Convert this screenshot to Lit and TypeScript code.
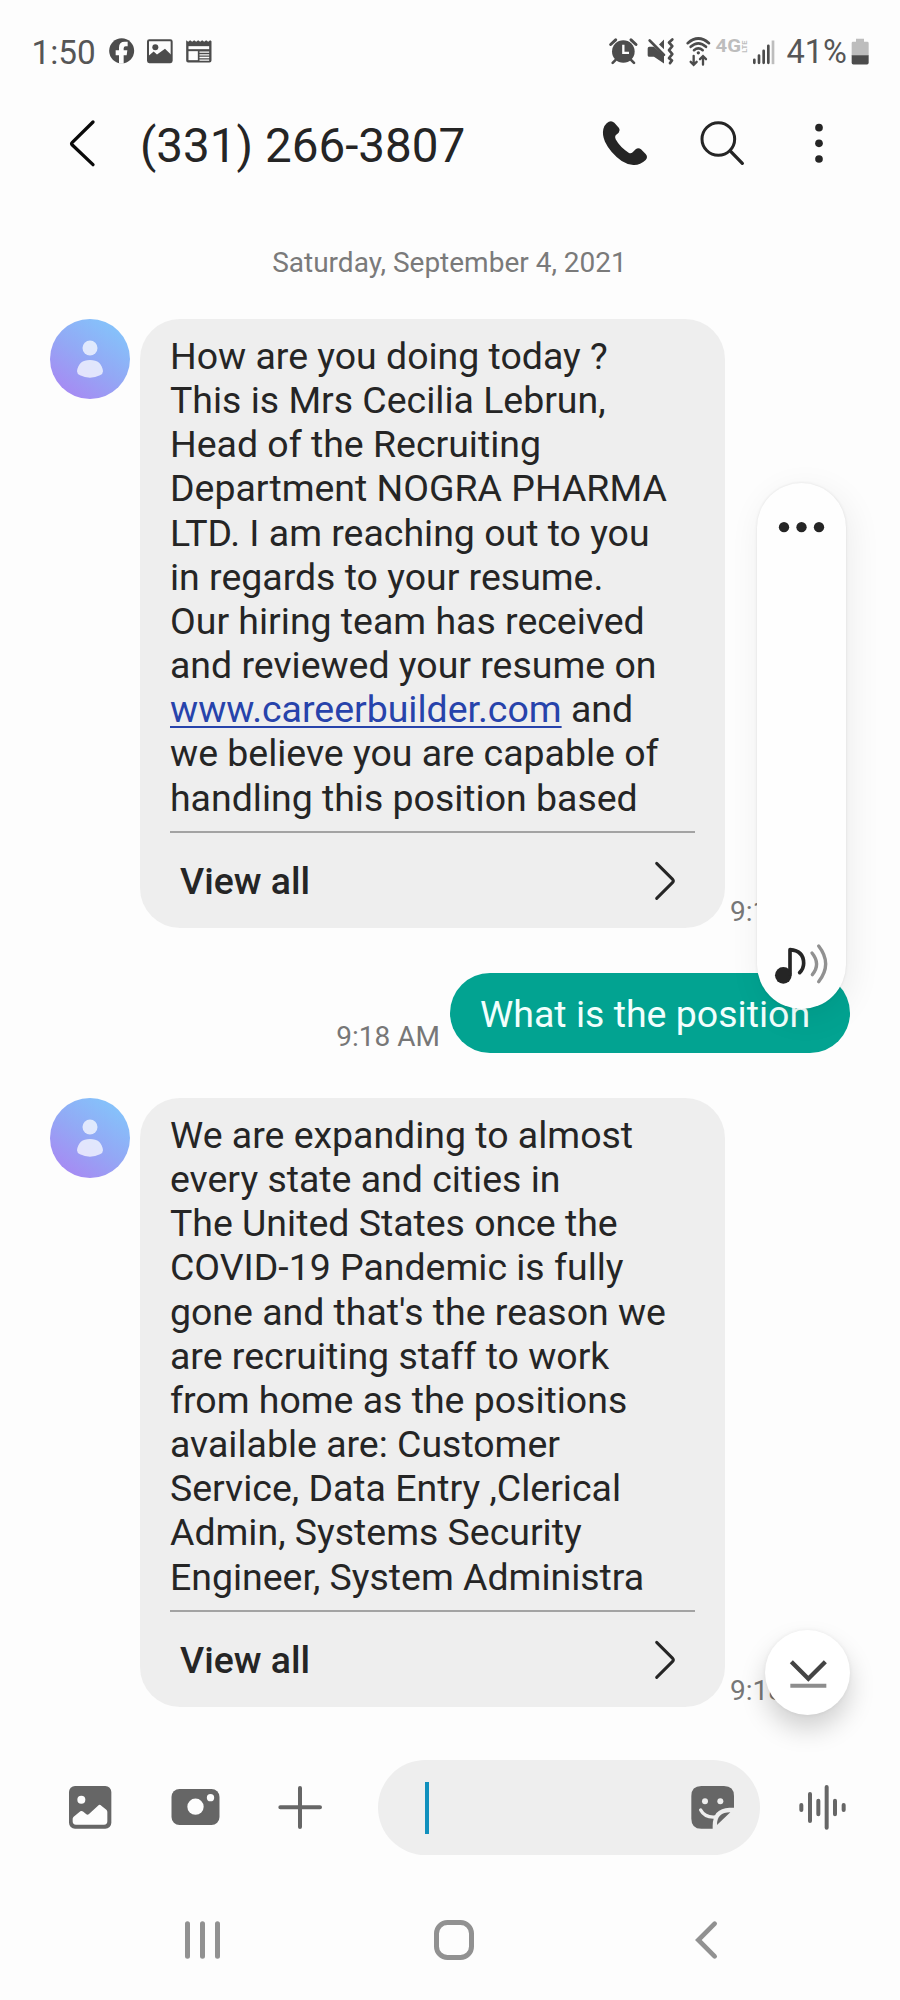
import { LitElement, html, svg, css, TemplateResult, SVGTemplateResult } from "lit";
import { customElement, property } from "lit/decorators.js";

/** Frames a drawing: the window (x, y, w, h) of a canvas whose units are a third of a pixel from (ox, oy). */
const icon = (
  win: [number, number, number, number],
  [ox, oy]: [number, number],
  body: SVGTemplateResult,
) => html`<svg width=${win[2]} height=${win[3]} viewBox=${win.join(" ")} aria-hidden="true">
  <g transform="translate(${ox} ${oy}) scale(.33333)">${body}</g>
</svg>`;

const base = css`
  :host {
    display: block;
    font-family: Roboto, "Liberation Sans", sans-serif;
  }
  svg {
    display: block;
    flex: none;
    overflow: visible;
  }
  .dark { fill: #252525; }
  .stroke { fill: none; stroke-linecap: round; stroke-linejoin: round; }
`;

@customElement("status-bar")
class StatusBar extends LitElement {
  static styles = [
    base,
    css`
      .bar {
        display: flex;
        align-items: center;
        height: 105px;
        padding: 0 29px 0 31.5px;
        color: #565656;
        font-size: 33.3px;
        line-height: 39px;
      }
      .clock { width: 64px; margin-right: 12.5px; }
      .grow { flex: 1; }
      .left { display: flex; gap: 10.3px; }
      .percent { width: 61px; font-size: 32.6px; margin-left: 10.5px; margin-right: 3.5px; white-space: nowrap; }
      .ink { fill: #4c4c4c; }
      .line { fill: none; stroke: #4c4c4c; stroke-linecap: round; }
      .pale { fill: #bdbdbd; }
      .net { font-family: Roboto, sans-serif; font-weight: 700; fill: #bdbdbd; }
    `,
  ];
  render() {
    return html`<div class="bar">
      <span class="clock">1:50</span>
      <div class="left">
        ${icon([108, 36.5, 28, 32], [0, 0], svg`
          <circle class="ink" cx="365" cy="151" r="37.5"/>
          <path fill="#fdfdfd" d="M357 189V164H347V149H357V141Q357 124 374 124H383V137H377Q371 137 371 143V149H382L380 164H371V189Z"/>`)}
        ${icon([146, 36.5, 28, 32], [0, 0], svg`
          <rect class="line" x="444" y="119" width="71" height="66" rx="4" stroke-width="6"/>
          <circle class="ink" cx="466" cy="140" r="9"/>
          <path class="ink" d="M446 166L461 153L471 162L495 145L515 164V185H446Z"/>`)}
        ${icon([184.5, 36.5, 28, 32], [0, 0], svg`
          <path class="ink" d="M557 119l6 5 6-5 6 5 6-5 6 5 6-5 6 5 6-5 6 5 6-5 6 5 6-5 4 3V180Q633 186 627 186H563Q557 186 557 180Z"/>
          <rect fill="#fdfdfd" x="564" y="137" width="62" height="9"/>
          <rect fill="#fdfdfd" x="564" y="152" width="28" height="27"/>
          <path stroke="#fdfdfd" stroke-width="4" d="M597 155H626M597 163H626M597 171H626M597 179H626"/>`)}
      </div>
      <span class="grow"></span>
      ${icon([608, 36.5, 39, 32], [580, 20], svg`
        <circle class="ink" cx="130" cy="93" r="34"/>
        <path class="line" stroke-width="9" stroke-linecap="butt" d="M92 72L107 58M168 72L153 58"/>
        <path class="line" stroke-width="8" d="M107 118L98 127M153 118L162 127"/>
        <path fill="none" stroke="#fdfdfd" stroke-width="7" d="M130 73V97H147"/>`)}
      ${icon([647, 36.5, 39, 32], [580, 20], svg`
        <path class="ink" d="M208 79H222L252 106V129L222 109H208Q203 109 203 104V84Q203 79 208 79ZM252 57V86L237 72Z"/>
        <path class="line" stroke-width="8" d="M209 60L252 103"/>
        <path class="line" stroke-width="8" stroke-linejoin="round" d="M277 57L267 66L277 77L267 89L277 101L267 113L276 120L270 128"/>`)}
      ${icon([686, 36.5, 29, 32], [580, 20], svg`
        <path class="line" stroke-width="8" stroke-linecap="butt" d="M323 68Q355 40 387 68M332 79Q355 58 378 79M342 89Q355 78 368 89"/>
        <circle class="ink" cx="355" cy="97" r="5"/>
        <path class="line" stroke-width="7" d="M341 106V132M332 124L341 133L350 124M369 132V108M360 116L369 107L378 116"/>`)}
      <svg width="36" height="32" viewBox="715 36.5 36 32" role="img">
        <text class="net" font-size="17.8" textLength="25.5" lengthAdjust="spacingAndGlyphs" x="715.6" y="51.8">4G</text>
        <text class="net" font-size="7.6" transform="translate(747.4 52.2) rotate(-90)">LTE</text>
      </svg>
      ${icon([751, 36.5, 25, 32], [580, 20], svg`
        <path class="line" stroke-width="8" d="M523 118V127M537 105V127M551 91V127M565 76V127"/>
        <path stroke="#bdbdbd" stroke-width="8" d="M579 60V131"/>`)}
      <span class="percent">41%</span>
      ${icon([851, 36.5, 20, 32], [580, 20], svg`
        <path class="pale" d="M828 55H852V64H862Q866 64 866 68V106H815V68Q815 64 819 64H828Z"/>
        <path class="ink" d="M815 104H866V127Q866 132 861 132H820Q815 132 815 127Z"/>`)}
    </div>`;
  }
}

@customElement("chat-header")
class ChatHeader extends LitElement {
  static styles = [
    base,
    css`
      header {
        display: flex;
        align-items: center;
        height: 82px;
        padding: 0 70px 0 60px;
      }
      h1 {
        flex: 1;
        margin: 0 0 0 40px;
        font-size: 47.6px;
        line-height: 56px;
        font-weight: 400;
        color: #252525;
      }
      .actions { display: flex; gap: 40px; }
    `,
  ];
  render() {
    return html`<header>
      ${icon([60, 116, 40, 60], [0, 0], svg`<path class="stroke" stroke="#0a0a0a" stroke-width="10" d="M279 366L217 427Q213 431 217 435L279 494"/>`)}
      <h1>(331) 266-3807</h1>
      <div class="actions">
        ${icon([600, 116, 56, 60], [580, 20], svg`<path class="dark" d="M80 310Q92 298 103 308L117 324Q122 331 116 338L107 346Q103 352 107 358Q120 382 147 399Q153 402 158 397L167 388Q175 382 183 388L197 402Q205 411 197 420Q180 436 160 435Q140 433 125 423Q90 397 75 365Q66 345 70 327Q73 316 80 310Z"/>`)}
        ${icon([696, 116, 56, 60], [580, 20], svg`
          <circle fill="none" stroke="#252525" stroke-width="9" cx="415" cy="357" r="49"/>
          <path class="stroke" stroke="#252525" stroke-width="10" d="M452 394L487 430"/>`)}
        ${icon([792, 116, 38, 60], [580, 20], svg`
          <circle class="dark" cx="717" cy="323" r="11.5"/><circle class="dark" cx="717" cy="370" r="11.5"/><circle class="dark" cx="717" cy="417" r="11.5"/>`)}
      </div>
    </header>`;
  }
}

@customElement("received-message")
class ReceivedMessage extends LitElement {
  @property({ attribute: false }) lines: (string | TemplateResult)[] = [];
  @property() time = "";
  static styles = [
    base,
    css`
      .row { display: flex; align-items: flex-start; padding-left: 50px; }
      .bubble {
        box-sizing: border-box;
        flex: none;
        width: 585px;
        height: 609px;
        margin-left: 10px;
        padding: 15px 30px 0;
        border-radius: 40px;
        background: #eeeeee;
        color: #252525;
        font-size: 37.45px;
      }
      .text { line-height: 44.15px; white-space: nowrap; }
      .more {
        display: flex;
        align-items: center;
        justify-content: space-between;
        box-sizing: border-box;
        height: 96.5px;
        margin-top: 11.6px;
        padding: 0 18px 0 10px;
        border-top: 2px solid #a3a3a3;
        font-weight: 500;
      }
      .time {
        align-self: flex-end;
        margin-left: 5px;
        font-size: 28px;
        line-height: 33px;
        color: #777;
        white-space: nowrap;
      }
      a {
        color: #2743ab;
        text-decoration: underline;
        text-decoration-thickness: 2px;
        text-underline-offset: 4px;
      }
    `,
  ];
  render() {
    return html`<div class="row">
      ${icon([50, 319, 80, 80], [30, 300], svg`
        <defs><linearGradient id="sky" x1=".2" y1=".9" x2=".75" y2=".1">
          <stop offset="0" stop-color="#a58cf3"/><stop offset=".5" stop-color="#93a8f5"/><stop offset="1" stop-color="#86c0fa"/>
        </linearGradient></defs>
        <circle cx="180" cy="177" r="120" fill="url(#sky)"/>
        <g fill="#fff" fill-opacity=".72"><circle cx="180" cy="144" r="22.5"/>
        <path d="M141 214Q145 180 180 180Q215 180 219 214Q219 222 210 226Q196 233 180 233Q164 233 150 226Q141 222 141 214Z"/></g>`)}
      <div class="bubble">
        <div class="text">${this.lines.map((l) => html`<div>${l}</div>`)}</div>
        <div class="more">
          <span>View all</span>
          ${icon([655, 860, 22, 42], [560, 780], svg`<path class="stroke" stroke="#252525" stroke-width="9" d="M290 250L338 298Q342 303 338 307L290 355"/>`)}
        </div>
      </div>
      <span class="time">${this.time}</span>
    </div>`;
  }
}

@customElement("sent-message")
class SentMessage extends LitElement {
  static styles = [
    base,
    css`
      .row { display: flex; justify-content: flex-end; align-items: flex-end; padding-right: 50px; }
      .time { margin-right: 10px; font-size: 28px; line-height: 33px; color: #777; }
      .bubble {
        box-sizing: border-box;
        width: 400px;
        height: 80px;
        padding: 18.6px 30px 0;
        border-radius: 40px;
        background: #02a391;
        color: #f2fffd;
        font-size: 37.5px;
        line-height: 44px;
        white-space: nowrap;
      }
    `,
  ];
  render() {
    return html`<div class="row"><span class="time">9:18 AM</span><div class="bubble"><slot></slot></div></div>`;
  }
}

@customElement("message-composer")
class MessageComposer extends LitElement {
  static styles = [
    base,
    css`
      .row { display: flex; align-items: center; height: 95px; padding-left: 65px; }
      .tools { display: flex; gap: 53.5px; margin-right: 53.5px; }
      .field {
        display: flex;
        align-items: center;
        justify-content: space-between;
        box-sizing: border-box;
        width: 382px;
        height: 95px;
        margin-right: 37px;
        padding: 0 24px 0 47px;
        border-radius: 47.5px;
        background: #eeeeee;
      }
      .caret { width: 4px; height: 52px; background: #1090bd; }
      .g { fill: #666; }
      .hole { fill: #fdfdfd; }
      .s { stroke: #666; stroke-width: 12; }
    `,
  ];
  render() {
    const at: [number, number] = [30, 1580];
    return html`<div class="row">
      <div class="tools">
        ${icon([65, 1780, 50, 55], at, svg`
          <rect class="g" x="117" y="618" width="127" height="128" rx="18"/><circle class="hole" cx="154" cy="659" r="12"/>
          <path class="hole" d="M128 716Q128 713 131 710L151 694Q155 691 160 695L169 703Q173 706 177 702L204 677Q209 672 214 677L229 689Q232 692 232 696V724Q232 734 222 734H138Q128 734 128 724Z"/>`)}
        ${icon([168.5, 1780, 54, 55], at, svg`
          <rect class="g" x="423" y="627" width="144" height="108" rx="24"/><circle class="hole" cx="495" cy="680" r="24.5"/><circle class="hole" cx="540" cy="653" r="11"/>`)}
        ${icon([276, 1780, 48, 55], at, svg`<path class="stroke s" d="M810 624V741M751 682H870"/>`)}
      </div>
      <div class="field">
        <span class="caret"></span>
        ${icon([689, 1780, 47, 55], [560, 1580], svg`
          <path class="g" d="M424 618H492Q522 618 522 648V683H508Q458 685 458 738V746H424Q394 746 394 716V648Q394 618 424 618Z"/>
          <path class="g" d="M471 735Q470 697 511 697Z"/>
          <path class="stroke" stroke="#eee" stroke-width="10" d="M422 690Q434 713 465 711"/>
          <circle fill="#eee" cx="435" cy="663.5" r="9"/><circle fill="#eee" cx="481" cy="663.5" r="9"/>`)}
      </div>
      ${icon([797, 1780, 52, 55], [560, 1580], svg`
        <path class="stroke s" d="M724 675V690M750 642V723M775 662V703M800 621V743M825 662V703M851 675V690"/>`)}
    </div>`;
  }
}

@customElement("nav-bar")
class NavBar extends LitElement {
  static styles = [
    base,
    css`
      nav { display: flex; gap: 209px; padding: 62px 0 0 182px; }
      .back { margin-left: 8px; }
      .n { stroke: #919191; }
    `,
  ];
  render() {
    return html`<nav>
      ${icon([182, 1917, 41, 46], [30, 1720], svg`<path class="stroke n" stroke-width="15" d="M472.5 611V709M517.5 611V709M562.5 611V709"/>`)}
      ${icon([432, 1917, 44, 46], [430, 1880], svg`<rect class="stroke n" stroke-width="15" x="19.5" y="127.5" width="105" height="105" rx="33"/>`)}
      <div class="back">${icon([693, 1917, 28, 46], [430, 1880], svg`<path class="n" fill="none" stroke-width="14" stroke-linecap="round" d="M854 131L805 180L854 229"/>`)}</div>
    </nav>`;
  }
}

@customElement("app-root")
class AppRoot extends LitElement {
  static styles = [
    base,
    css`
      :host {
        position: relative;
        width: 900px;
        height: 2000px;
        overflow: hidden;
        background: #fdfdfd;
      }
      .date {
        margin: 59px 0 40px;
        padding-right: 1px;
        text-align: center;
        font-size: 28px;
        line-height: 33px;
        color: #7a7a7a;
      }
      .thread { display: flex; flex-direction: column; gap: 45px; margin-bottom: 53px; }
      .volume {
        position: absolute;
        left: 757px;
        top: 482.5px;
        box-sizing: border-box;
        display: flex;
        flex-direction: column;
        align-items: center;
        justify-content: space-between;
        width: 89px;
        height: 526px;
        padding: 36px 0 23px;
        border-radius: 45px;
        background: #fefefe;
        box-shadow: 0 0 3px rgba(0, 0, 0, 0.1), 4px 8px 34px rgba(0, 0, 0, 0.07);
      }
      .jump {
        position: absolute;
        left: 765px;
        top: 1630px;
        width: 85px;
        height: 85px;
        display: grid;
        place-items: center;
        border-radius: 50%;
        background: #fff;
        box-shadow: 0 0 4px rgba(0, 0, 0, 0.06), 0 14px 26px rgba(0, 0, 0, 0.18);
      }
    `,
  ];
  render() {
    const first = [
      "How are you doing today ?",
      "This is Mrs Cecilia Lebrun,",
      "Head of the Recruiting",
      "Department NOGRA PHARMA",
      "LTD. I am reaching out to you",
      "in regards to your resume.",
      "Our hiring team has received",
      "and reviewed your resume on",
      html`<a>www.careerbuilder.com</a> and`,
      "we believe you are capable of",
      "handling this position based",
    ];
    const second = [
      "We are expanding to almost",
      "every state and cities in",
      "The United States once the",
      "COVID-19 Pandemic is fully",
      "gone and that's the reason we",
      "are recruiting staff to work",
      "from home as the positions",
      "available are: Customer",
      "Service, Data Entry ,Clerical",
      "Admin, Systems Security",
      "Engineer, System Administra",
    ];
    return html`
      <status-bar></status-bar>
      <chat-header></chat-header>
      <div class="date">Saturday, September 4, 2021</div>
      <div class="thread">
        <received-message .lines=${first} time="9:17 AM"></received-message>
        <sent-message>What is the position</sent-message>
        <received-message .lines=${second} time="9:18 AM"></received-message>
      </div>
      <message-composer></message-composer>
      <nav-bar></nav-bar>
      <div class="volume">
        ${icon([778, 518.5, 47, 16], [720, 460], svg`
          <circle class="dark" cx="192" cy="200" r="15.5"/><circle class="dark" cx="244.5" cy="200" r="15.5"/><circle class="dark" cx="297" cy="200" r="15.5"/>`)}
        ${icon([774, 942, 55, 44], [560, 780], svg`
          <circle class="dark" cx="670" cy="586" r="25"/>
          <path class="stroke" stroke="#252525" stroke-width="11" d="M690 582V509Q731 512 731 550Q731 566 719 578"/>
          <path class="stroke" stroke="#919191" stroke-width="10" d="M756 519Q783 552 757 584M776 498Q818 552 776 605"/>`)}
      </div>
      <div class="jump">
        ${icon([788, 1656, 40, 34], [560, 1580], svg`
          <path fill="none" stroke="#444" stroke-width="13" d="M694 245L745 296L796 245"/>
          <path stroke="#8d8d8d" stroke-width="12" d="M691 317H799"/>`)}
      </div>`;
  }
}
